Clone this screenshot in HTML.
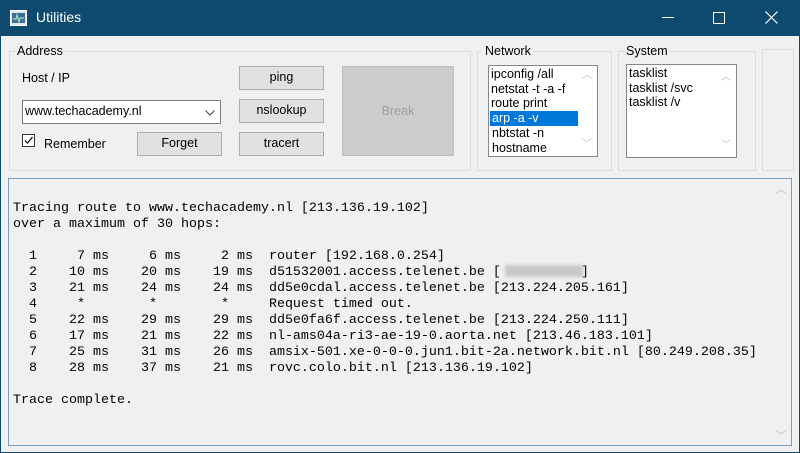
<!DOCTYPE html>
<html><head><style>
body{margin:0;width:800px;height:453px;overflow:hidden;background:#0d4a6e;font-family:"Liberation Sans",sans-serif;font-size:12.5px;color:#000}
.win{position:absolute;left:1px;top:36px;width:798px;height:416px;background:#f0f0f0}
.tb{position:absolute;left:0;top:0;width:800px;height:36px;color:#fff}
.abs{position:absolute}
fieldset{position:absolute;border:1px solid #dcdcdc;margin:0;padding:0}
legend{padding:0 2px;margin-left:5px;font-size:12.5px}
.btn{position:absolute;background:#e1e1e1;border:1px solid #adadad;text-align:center;box-sizing:border-box;line-height:21px;font-size:12.5px}
.lb{position:absolute;background:#fff;border:1px solid #828790;box-sizing:border-box;font-size:12.5px;line-height:14.5px}
.mono{font-family:"Liberation Mono",monospace;font-size:13.33px;line-height:16px;white-space:pre;position:absolute;left:4px;top:22px}
.arr{position:absolute;color:#bbb;font-size:10px}
</style></head><body>
<div class="tb">
 <svg class="abs" style="left:10px;top:10px" width="17" height="16"><rect x="0.5" y="0.5" width="16" height="15" fill="#dfe9f2" stroke="#fff"/><rect x="2" y="3" width="13" height="10" fill="#3d6f96"/><path d="M3 9 L6 9 L7 5 L9 12 L10 8 L14 8" stroke="#9fe0c0" fill="none" stroke-width="1.2"/></svg>
 <div class="abs" style="left:36px;top:9px;font-size:14px">Utilities</div>
 <div class="abs" style="left:662px;top:17px;width:12px;height:1px;background:#fff"></div>
 <div class="abs" style="left:713px;top:12px;width:10px;height:10px;border:1px solid #fff"></div>
 <svg class="abs" style="left:765px;top:11px" width="13" height="13"><path d="M0.5 0.5L12.5 12.5M12.5 0.5L0.5 12.5" stroke="#fff" stroke-width="1.2"/></svg>
</div>
<div class="win">
 <fieldset style="left:8px;top:8px;width:460px;height:125px"><legend>Address</legend></fieldset>
 <div class="abs" style="left:21px;top:35px">Host / IP</div>
 <div class="abs" style="left:21px;top:64px;width:199px;height:24px;background:#fff;border:1px solid #7a7a7a;box-sizing:border-box"></div>
 <div class="abs" style="left:24px;top:68px">www.techacademy.nl</div>
 <svg class="abs" style="left:204px;top:74px" width="10" height="6"><path d="M0.5 0.5L5 5L9.5 0.5" stroke="#444" fill="none"/></svg>
 <div class="abs" style="left:21px;top:98px;width:13px;height:13px;border:1px solid #333;background:#fff;box-sizing:border-box"></div>
 <svg class="abs" style="left:22px;top:99px" width="11" height="11"><path d="M2 5.5L4.5 8L9.5 2" stroke="#000" fill="none" stroke-width="1.2"/></svg>
 <div class="abs" style="left:43px;top:101px">Remember</div>
 <div class="btn" style="left:136px;top:96px;width:85px;height:24px">Forget</div>
 <div class="btn" style="left:238px;top:30px;width:85px;height:24px">ping</div>
 <div class="btn" style="left:238px;top:63px;width:85px;height:24px">nslookup</div>
 <div class="btn" style="left:238px;top:96px;width:85px;height:24px">tracert</div>
 <div class="abs" style="left:341px;top:30px;width:112px;height:90px;background:#cccccc;border:1px solid #bfbfbf;box-sizing:border-box;color:#a0a0a0;text-align:center;line-height:88px">Break</div>
 <fieldset style="left:476px;top:8px;width:133px;height:125px"><legend>Network</legend></fieldset>
 <div class="lb" style="left:487px;top:29px;width:110px;height:92px">
  <div style="padding:1px 2px">ipconfig /all<br>netstat -t -a -f<br>route print</div>
  <div style="position:absolute;left:1px;top:45px;width:86px;height:15px;background:#0078d7;color:#fff;padding-left:2px">arp -a -v</div>
  <div style="position:absolute;left:3px;top:60px">nbtstat -n<br>hostname</div>
  <div class="arr" style="left:93px;top:3px">︿</div><div class="arr" style="left:93px;top:72px">﹀</div>
 </div>
 <fieldset style="left:617px;top:8px;width:136px;height:125px"><legend>System</legend></fieldset>
 <div class="lb" style="left:625px;top:28px;width:111px;height:94px">
  <div style="padding:1px 2px">tasklist<br>tasklist /svc<br>tasklist /v</div>
  <div class="arr" style="left:94px;top:6px">︿</div><div class="arr" style="left:94px;top:74px">﹀</div>
 </div>
 <fieldset style="left:761px;top:13px;width:30px;height:120px"></fieldset>
 <div class="abs" style="left:7px;top:142px;width:784px;height:268px;border:1px solid #7a9cc0;box-sizing:border-box">
  <div class="mono">Tracing route to www.techacademy.nl [213.136.19.102]
over a maximum of 30 hops:

  1     7 ms     6 ms     2 ms  router [192.168.0.254]
  2    10 ms    20 ms    19 ms  d51532001.access.telenet.be [          ]
  3    21 ms    24 ms    24 ms  dd5e0cdal.access.telenet.be [213.224.205.161]
  4     *        *        *     Request timed out.
  5    22 ms    29 ms    29 ms  dd5e0fa6f.access.telenet.be [213.224.250.111]
  6    17 ms    21 ms    22 ms  nl-ams04a-ri3-ae-19-0.aorta.net [213.46.183.101]
  7    25 ms    31 ms    26 ms  amsix-501.xe-0-0-0.jun1.bit-2a.network.bit.nl [80.249.208.35]
  8    28 ms    37 ms    21 ms  rovc.colo.bit.nl [213.136.19.102]

Trace complete.</div>
  <div class="abs" style="left:496px;top:86px;width:78px;height:12px;background:#c8c8c8;filter:blur(1.5px)"></div>
  <div class="arr" style="left:767px;top:2px">︿</div><div class="arr" style="left:767px;top:248px">﹀</div>
 </div>
</div>
</body></html>
